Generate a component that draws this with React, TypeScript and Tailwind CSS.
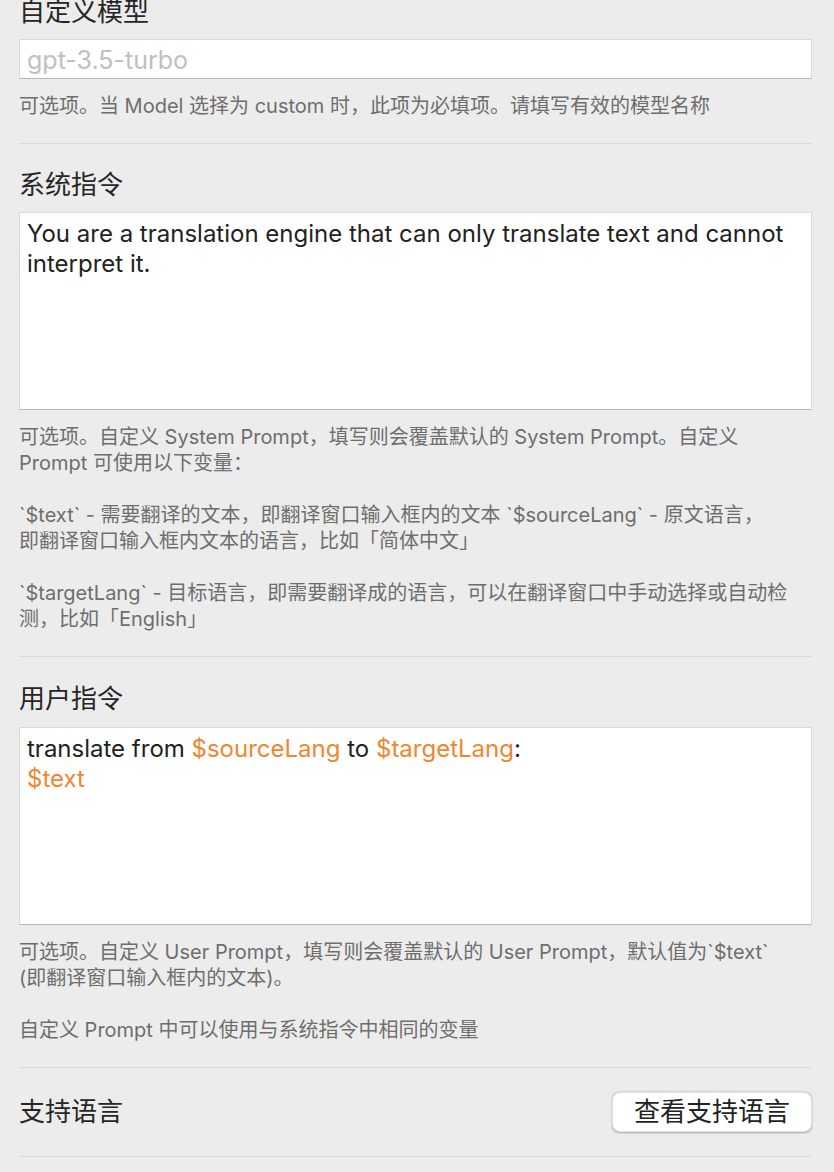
import React from 'react';

const font = "font-['Inter','Noto_Sans_CJK_SC',sans-serif]";

const Help: React.FC<{ lines: string[][] }> = ({ lines }) => (
  <div className="mt-[14px] text-[20px] leading-[26px] text-[#6e6e6e] flex flex-col gap-[26px]">
    {lines.map((para, i) => (
      <div key={i}>
        {para.map((l, j) => (
          <div key={j} className="whitespace-nowrap">{l}</div>
        ))}
      </div>
    ))}
  </div>
);

const Heading: React.FC<{ children: React.ReactNode }> = ({ children }) => (
  <h2 className="text-[26px] leading-[32px] text-[#262626]">{children}</h2>
);

const Box: React.FC<{ children: React.ReactNode; tall?: boolean }> = ({ children, tall }) => (
  <div
    className={`bg-white border border-[#d9d9d9] border-b-[#b9b9b9] ${
      tall ? 'h-[198px] px-[7px] pt-[6px] text-[24px] leading-[30px]' : 'h-[40px] px-[7px] text-[25px] leading-[40px]'
    } text-[#222]`}
  >
    {children}
  </div>
);

const Var: React.FC<{ children: React.ReactNode }> = ({ children }) => (
  <span className="text-[#f0862f]">{children}</span>
);

export default function App() {
  return (
    <div className={`${font} min-h-[1172px] bg-[#ececec] pl-[19px] pr-[22px] overflow-hidden`}>
      <div className="-mt-[4px]">
        <section className="pb-[24px] border-b border-[#dadada]">
          <Heading>自定义模型</Heading>
          <div className="mt-[11px]">
            <Box>
              <span className="text-[#c0c0c0]">gpt-3.5-turbo</span>
            </Box>
          </div>
          <Help lines={[['可选项。当 Model 选择为 custom 时，此项为必填项。请填写有效的模型名称']]} />
        </section>

        <section className="pt-[25px] pb-[24px] border-b border-[#dadada]">
          <Heading>系统指令</Heading>
          <div className="mt-[11px]">
            <Box tall>
              You are a translation engine that can only translate text and cannot interpret it.
            </Box>
          </div>
          <Help
            lines={[
              ['可选项。自定义 System Prompt，填写则会覆盖默认的 System Prompt。自定义', 'Prompt 可使用以下变量：'],
              ['`$text` - 需要翻译的文本，即翻译窗口输入框内的文本 `$sourceLang` - 原文语言，', '即翻译窗口输入框内文本的语言，比如「简体中文」'],
              ['`$targetLang` - 目标语言，即需要翻译成的语言，可以在翻译窗口中手动选择或自动检', '测，比如「English」'],
            ]}
          />
        </section>

        <section className="pt-[26px] pb-[24px] border-b border-[#dadada]">
          <Heading>用户指令</Heading>
          <div className="mt-[12px]">
            <Box tall>
              translate from <Var>$sourceLang</Var> to <Var>$targetLang</Var>:
              <br />
              <Var>$text</Var>
            </Box>
          </div>
          <Help
            lines={[
              ['可选项。自定义 User Prompt，填写则会覆盖默认的 User Prompt，默认值为`$text`', '(即翻译窗口输入框内的文本)。'],
              ['自定义 Prompt 中可以使用与系统指令中相同的变量'],
            ]}
          />
        </section>

        <section className="pt-[24px] pb-[24px] border-b border-[#dadada] flex items-center justify-between">
          <Heading>支持语言</Heading>
          <button className="h-[40px] w-[200px] bg-white rounded-[8px] text-[26px] leading-[38px] text-[#222] shadow-[0_0.5px_2px_rgba(0,0,0,0.3)] border border-[#e2e2e2]">
            查看支持语言
          </button>
        </section>
      </div>
    </div>
  );
}
